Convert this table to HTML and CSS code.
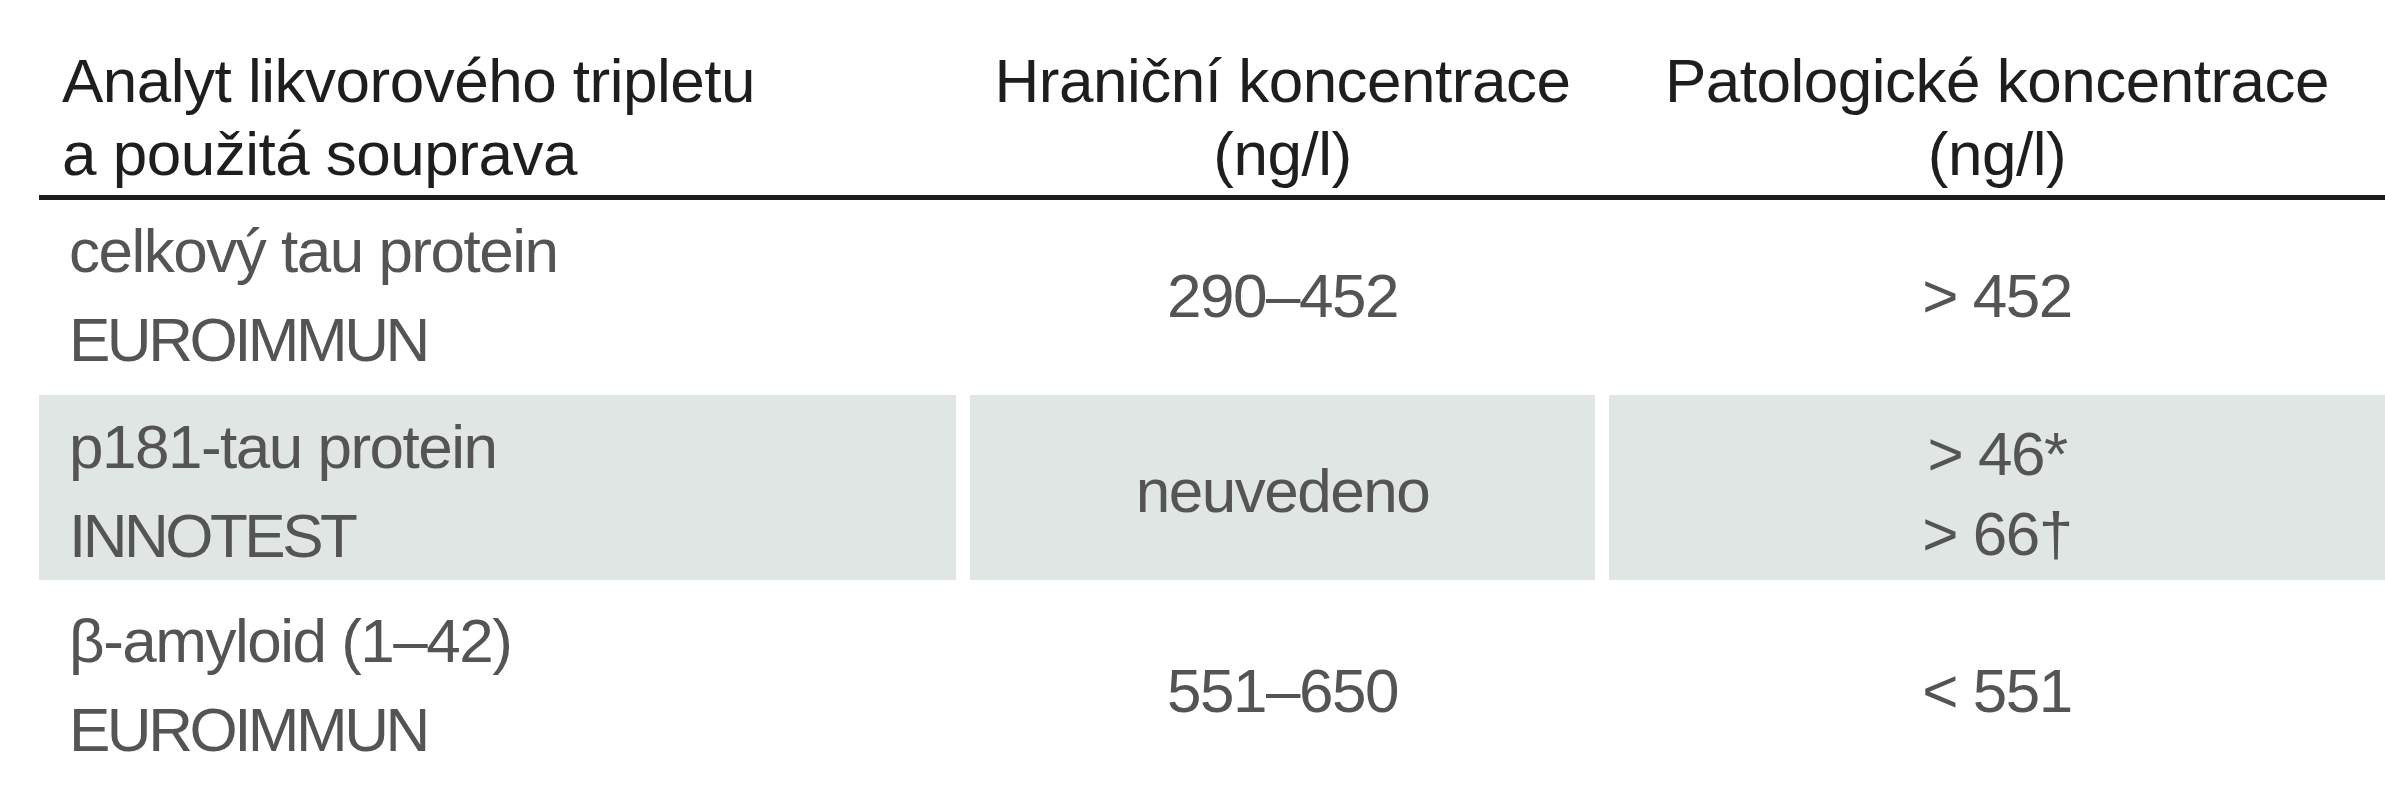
FILE: index.html
```html
<!DOCTYPE html>
<html lang="cs">
<head>
<meta charset="utf-8">
<title>Analyt likvorového tripletu</title>
<link rel="stylesheet" href="styles.css">
</head>
<body>
<div class="table">
  <div class="row head">
    <div class="cell left">Analyt likvorového tripletu<br>a použitá souprava</div>
    <div class="cell mid">Hraniční koncentrace<br>(ng/l)</div>
    <div class="cell mid">Patologické koncentrace<br>(ng/l)</div>
  </div>
  <div class="row body r1">
    <div class="cell left">celkový tau protein<br><span class="kit">EUROIMMUN</span></div>
    <div class="cell mid single">290–452</div>
    <div class="cell mid single">&gt; 452</div>
  </div>
  <div class="row body r2 shaded">
    <div class="cell left">p181-tau protein<br><span class="kit">INNOTEST</span></div>
    <div class="cell mid single">neuvedeno</div>
    <div class="cell mid multi">&gt; 46*<br>&gt; 66†</div>
  </div>
  <div class="row body r3">
    <div class="cell left">β-amyloid (1–42)<br><span class="kit">EUROIMMUN</span></div>
    <div class="cell mid single">551–650</div>
    <div class="cell mid single">&lt; 551</div>
  </div>
</div>
</body>
</html>
```
FILE: styles.css
```css
html, body {
  margin: 0;
  padding: 0;
  background: #ffffff;
}

body {
  font-family: "Liberation Sans", Arial, sans-serif;
  font-size: 62px;
}

.table {
  margin-left: 39px;
  width: 2346px;
}

.row {
  display: grid;
  grid-template-columns: 917px 625px 1fr;
  column-gap: 14px;
}

.head {
  height: 195px;
  border-bottom: 5px solid #1c1c1e;
  color: #1e1e20;
  line-height: 73px;
  letter-spacing: -0.5px;
}

.head .cell {
  align-self: end;
  padding-bottom: 5px;
}

.head .left {
  padding-left: 23px;
}

.body {
  color: #545456;
  line-height: 89px;
  letter-spacing: -1.5px;
}

.kit {
  letter-spacing: -3.5px;
}

.r1 { height: 195px; }
.r2 { height: 185px; }
.r3 { height: 220px; }

.body .left {
  padding-left: 30px;
}

.r1 .left { padding-top: 6px; }
.r2 .left { padding-top: 7px; }
.r3 .left { padding-top: 16px; }

.mid {
  text-align: center;
}

.single {
  align-self: center;
}

.r1 .single {
  padding-bottom: 5px;
}

.multi {
  line-height: 80px;
  padding-top: 12px;
}

.shaded .cell {
  background: #dfe6e4;
}

.shaded .single,
.shaded .multi {
  align-self: stretch;
  display: flex;
  flex-direction: column;
  justify-content: center;
}

.shaded .single {
  padding-top: 5px;
}
```
